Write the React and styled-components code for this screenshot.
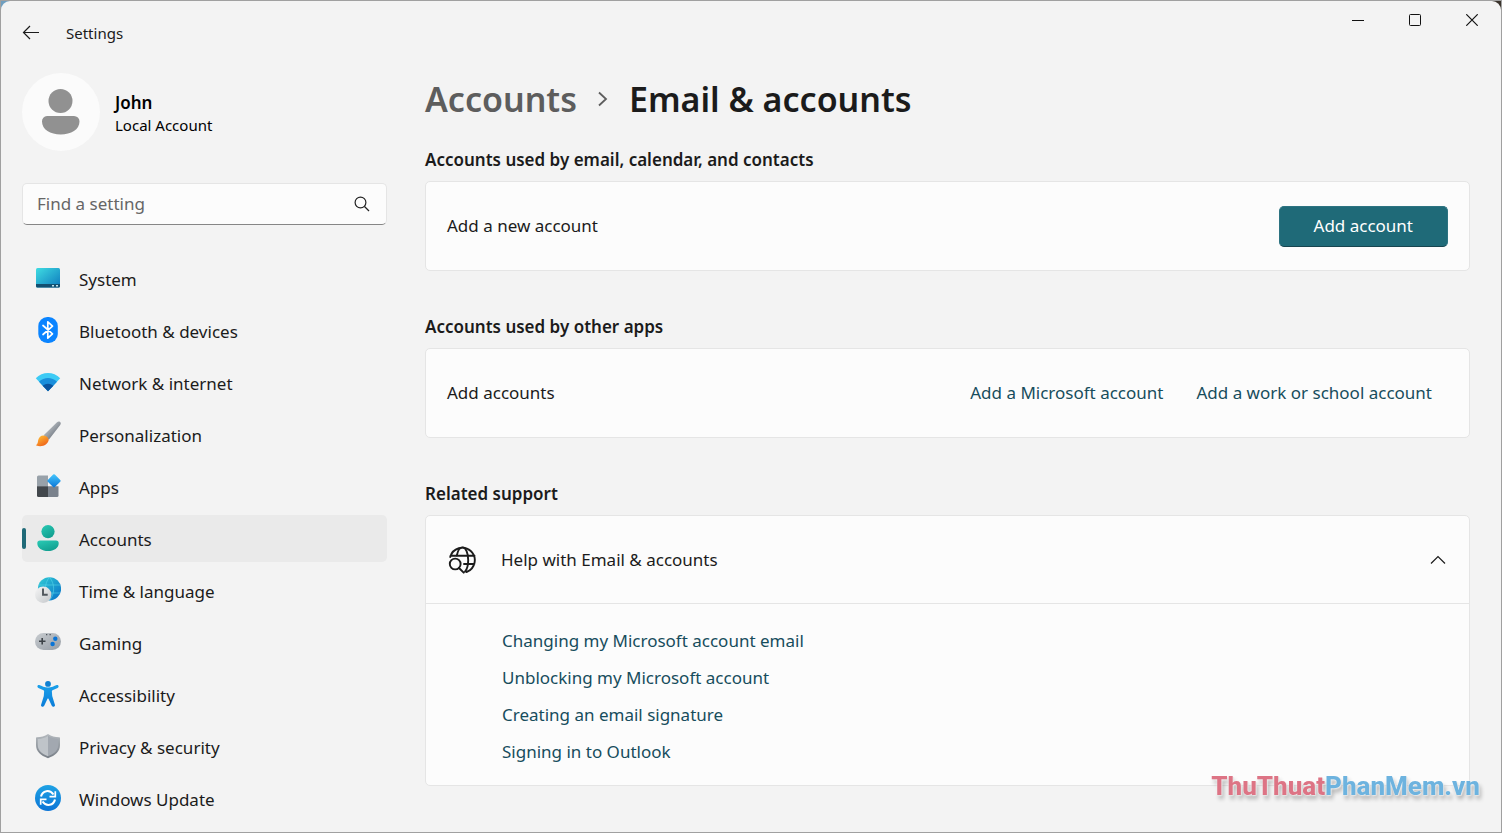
import React, { useState } from 'react'
import styled, { createGlobalStyle } from 'styled-components';

const GlobalStyle = createGlobalStyle`
  * {
    box-sizing: border-box;
  }

  body {
    margin: 0;
    color: #1b1b1b;
    font-family: "Noto Sans", "Open Sans", sans-serif;
    font-size: 17px;
    line-height: 24px;
  }

  button, input {
    font: inherit;
    color: inherit;
  }
`;

const Frame = styled.div`
  display: flex;
  min-height: 100vh;
  border: 1px solid #a0a0a0;
  background: linear-gradient(to right, #6f9fc0, #3a332c);
`;

const Window = styled.div`
  flex: 1;
  display: flex;
  flex-direction: column;
  border-radius: 9px 9px 0 0;
  background: #f3f3f3;
`;

const TitleBar = styled.header`
  display: flex;
  justify-content: space-between;
  align-items: flex-start;
  height: 64px;
`;

const TitleLeft = styled.div`
  display: flex;
  align-items: center;
  gap: 18px;
  padding: 12px 0 0 12px;
  font-size: 15px;
  line-height: 40px;
`;

const IconButton = styled.button`
  display: flex;
  align-items: center;
  justify-content: center;
  width: ${props => props.$width}px;
  height: 38px;
  padding: 0;
  border: none;
  background: transparent;

  &:hover {
    background: #e6e6e6;
  }
`;

const WindowControls = styled.div`
  display: flex;
  padding-right: 1px;
`;

const Body = styled.div`
  flex: 1;
  display: flex;
  gap: 38px;
  padding: 0 31px 8px 21px;
`;

const Sidebar = styled.aside`
  flex: none;
  width: 365px;
`;

const Profile = styled.div`
  display: flex;
  align-items: center;
  gap: 15px;
  padding-top: 8px;
  color: #000;
  font-size: 15px;
  line-height: 23px;
`;

const ProfileText = styled.div`
  padding-top: 4px;
`;

const ProfileName = styled.div`
  font-size: 17px;
  font-weight: 600;
`;

const SearchBox = styled.label`
  display: flex;
  align-items: center;
  height: 42px;
  margin: 32px 0 30px;
  padding: 0 16px 0 14px;
  border: 1px solid #e5e5e5;
  border-bottom-color: #868686;
  border-radius: 5px;
  background: #fcfcfc;
`;

const SearchInput = styled.input`
  flex: 1;
  min-width: 0;
  padding: 0;
  border: none;
  outline: none;
  background: transparent;

  &::placeholder {
    color: #666;
    opacity: 1;
  }
`;

const NavList = styled.ul`
  display: flex;
  flex-direction: column;
  gap: 5px;
  margin: 0;
  padding: 0;
  list-style: none;
`;

const NavLink = styled.a`
  position: relative;
  display: flex;
  align-items: flex-start;
  gap: 18px;
  height: 47px;
  padding: 10px 0 0 13px;
  border-radius: 5px;
  background: ${props => props.$active ? '#eaeaea' : 'transparent'};
  color: inherit;
  line-height: 30px;
  text-decoration: none;

  &:hover {
    background: #eaeaea;
  }

  &::before {
    content: "";
    display: ${props => props.$active ? 'block' : 'none'};
    position: absolute;
    left: 0;
    top: 13px;
    width: 4px;
    height: 21px;
    border-radius: 2px;
    background: #1f6a78;
  }
`;

const Main = styled.main`
  flex: 1;
  min-width: 0;
`;

const Breadcrumb = styled.h1`
  display: flex;
  align-items: center;
  gap: 21px;
  margin: 10px 0 25px;
  font-size: 34px;
  font-weight: 600;
  line-height: 48px;
`;

const BreadcrumbLink = styled.a`
  color: #5d5d5d;
  text-decoration: none;
`;

const Section = styled.section`
  margin-bottom: 44px;

  &:last-child {
    margin-bottom: 0;
  }
`;

const SectionTitle = styled.h2`
  margin: 0 0 9px;
  font-size: 17px;
  font-weight: 600;
  line-height: 24px;
`;

const Card = styled.div`
  border: 1px solid #e5e5e5;
  border-radius: 5px;
  background: #fcfcfc;
`;

const CardRow = styled.div`
  display: flex;
  align-items: center;
  justify-content: space-between;
  min-height: 88px;
  padding: 0 21px;
`;

const LinkGroup = styled.div`
  display: flex;
  gap: 33px;
  padding-right: 16px;
`;

const TextLink = styled.a`
  color: #174d5c;
  text-decoration: none;
`;

const PrimaryButton = styled.button`
  height: 41px;
  padding: 0 34px;
  border: 1px solid #2d7381;
  border-bottom-color: #174550;
  border-radius: 5px;
  background: #1f6a78;
  color: #fff;
`;

const ExpanderHeader = styled.button`
  display: flex;
  align-items: center;
  gap: 24px;
  width: 100%;
  height: 87px;
  padding: 0 23px 0 22px;
  border: none;
  background: transparent;
  text-align: left;

  span {
    flex: 1;
  }
`;

const HelpLinks = styled.ul`
  display: flex;
  flex-direction: column;
  gap: 13px;
  margin: 0;
  padding: 25px 76px 21px;
  border-top: 1px solid #e5e5e5;
  list-style: none;
`;

const Watermark = styled.div`
  position: fixed;
  right: 22px;
  bottom: 28px;
  color: #6db3df;
  font-family: Roboto, "Liberation Sans", sans-serif;
  font-size: 26px;
  font-weight: 800;
  line-height: 38px;
  text-shadow: 0 0 2px #fff, 1px 1px 1px #ddd, 2px 4px 4px rgba(0, 0, 0, 0.3);
  pointer-events: none;

  span {
    color: #dd7485;
  }
`;

const icons = {
  system: (
    <>
      <defs>
        <linearGradient id="sys" x1="0" y1="0" x2="1" y2="1">
          <stop offset="0" stopColor="#3fdce2" />
          <stop offset="1" stopColor="#0d79bd" />
        </linearGradient>
      </defs>
      <rect x="1" y="3" width="24" height="19.5" rx="1.5" fill="url(#sys)" />
      <path d="M1 19h24v2a1.500 1.500 0 0 1-1.500 1.500h-21A1.500 1.500 0 0 1 1 21z" fill="#124f70" />
      <path d="M17 20h2v1.500h-2zM21 20h2v1.500h-2z" fill="#bfe3ee" />
    </>
  ),
  bluetooth: (
    <>
      <rect x="3.300" y="0" width="19.500" height="26" rx="9" fill="#0a84ff" />
      <path d="M8 8.500l9.500 8.300-4.700 4.400V4.800l4.700 4.400L8 17.500" fill="none" stroke="#fff" strokeWidth="1.700" strokeLinejoin="round" strokeLinecap="round" />
    </>
  ),
  network: (
    <>
      <path d="M.8 9.300C7.300 2.200 18.700 2.200 25.200 9.300L13 22.300z" fill="#3dcbf5" />
      <path d="M4 12.800C9.200 7.800 16.800 7.800 22 12.800L13 22.300z" fill="#1a8edb" />
      <path d="M7.600 16.700C11 14 15 14 18.400 16.700L13 22.300z" fill="#0c549e" />
    </>
  ),
  brush: (
    <>
      <defs>
        <linearGradient id="handle" x1="0" y1="0" x2="1" y2="1">
          <stop offset=".2" stopColor="#c3c8cd" />
          <stop offset=".8" stopColor="#6a717a" />
        </linearGradient>
        <linearGradient id="bristle" x1="0" y1="0" x2=".7" y2="1">
          <stop offset=".1" stopColor="#ffbe35" />
          <stop offset="1" stopColor="#ee5f18" />
        </linearGradient>
      </defs>
      <path d="M24.800.7c1.300.8 1.200 2.200.4 3.300L13.800 18.800 8.700 14.300 22 1.200c.9-.8 1.900-1 2.800-.5z" fill="url(#handle)" />
      <path d="M8.500 14.500c2.700.1 5 2 5.200 4.500C12.800 24 6.500 26.800.8 24.200c2.200-.9 1.900-2.800 2.400-5.100.6-2.800 2.700-4.700 5.300-4.600z" fill="url(#bristle)" />
    </>
  ),
  apps: (
    <>
      <defs>
        <linearGradient id="tile" x1="0" y1="0" x2="1" y2="1">
          <stop offset="0" stopColor="#46c9ff" />
          <stop offset="1" stopColor="#0a74d6" />
        </linearGradient>
      </defs>
      <path d="M3.500 2.500H13v11H2V4A1.500 1.500 0 0 1 3.500 2.500z" fill="#98a1a9" />
      <path d="M2 13.300h11V24H3.500A1.500 1.500 0 0 1 2 22.500z" fill="#42474c" />
      <path d="M13 13.300h10.500v9.200A1.500 1.500 0 0 1 22 24h-9z" fill="#7a828c" />
      <rect x="14" y="2.800" width="10" height="10" rx="1.200" transform="rotate(45 19 7.800)" fill="url(#tile)" />
    </>
  ),
  accounts: (
    <>
      <defs>
        <linearGradient id="person" x1="0" y1="0" x2=".6" y2="1">
          <stop offset="0" stopColor="#2acbb5" />
          <stop offset="1" stopColor="#129f90" />
        </linearGradient>
      </defs>
      <circle cx="13" cy="6.600" r="6.600" fill="url(#person)" />
      <path d="M5 15.500h16a2.700 2.700 0 0 1 2.700 2.700C23.700 23 19 26 13 26S2.300 23 2.300 18.200A2.700 2.700 0 0 1 5 15.500z" fill="url(#person)" />
    </>
  ),
  time: (
    <>
      <defs>
        <linearGradient id="globe" x1="0" y1="0" x2="1" y2="1">
          <stop offset="0" stopColor="#32cdd5" />
          <stop offset="1" stopColor="#0870c8" />
        </linearGradient>
        <linearGradient id="clock" x1="0" y1="0" x2="1" y2="1">
          <stop offset="0" stopColor="#f6f6f6" />
          <stop offset="1" stopColor="#c4c7ca" />
        </linearGradient>
      </defs>
      <circle cx="14.500" cy="11.800" r="11.600" fill="url(#globe)" />
      <path d="M4 8h21M4 16h21M14.500.3c-5.500 6-5.500 17 0 23M14.500.3c5.500 6 5.500 17 0 23" fill="none" stroke="#5fe0ee" strokeWidth="1" opacity=".5" />
      <circle cx="8.200" cy="17.800" r="8.200" fill="url(#clock)" />
      <path d="M8 11.500v6.300h4.700" fill="none" stroke="#50565c" strokeWidth="1.900" />
    </>
  ),
  gaming: (
    <>
      <defs>
        <linearGradient id="pad" x1="0" y1="0" x2="1" y2="1">
          <stop offset="0" stopColor="#c8ccd0" />
          <stop offset="1" stopColor="#969da5" />
        </linearGradient>
      </defs>
      <rect x="0" y="4" width="26" height="17" rx="8.500" fill="url(#pad)" />
      <path d="M7.200 9v6.500M4 12.200h6.500" stroke="#3d4247" strokeWidth="1.600" />
      <path d="M11 5.700h1.300M14.500 5.700h1.300" stroke="#4d5359" strokeWidth="1.300" />
      <circle cx="20.300" cy="9.800" r="2.200" fill="#0a74d6" />
      <circle cx="17.600" cy="15" r="2.200" fill="#0a74d6" />
    </>
  ),
  accessibility: (
    <>
      <defs>
        <linearGradient id="figure" x1="0" y1="0" x2="0" y2="1">
          <stop offset="0" stopColor="#1aa0ea" />
          <stop offset="1" stopColor="#0a7cd8" />
        </linearGradient>
      </defs>
      <circle cx="13" cy="2.900" r="2.900" fill="#0f80d2" />
      <path d="M4.200 4c2.800.9 5.200 2.600 8.800 2.600S19 4.900 21.800 4c2-.5 2.500 2.200.8 2.900l-5.100 2.300c-.5.3-.7.600-.6 1.300l.3 4.500 2.700 8.700c.6 2-2.300 2.900-3.100 1L13.600 18c-.3-.6-.9-.6-1.200 0l-3.200 6.700c-.9 1.900-3.700 1-3.100-1L8.800 15l.3-4.500c.1-.7-.1-1-.6-1.300L3.400 6.900C1.700 6.200 2.200 3.500 4.200 4z" fill="url(#figure)" />
    </>
  ),
  privacy: (
    <>
      <defs>
        <linearGradient id="shield" x1="0" y1="0" x2="0" y2="1">
          <stop offset="0" stopColor="#b4b9be" />
          <stop offset="1" stopColor="#777e86" />
        </linearGradient>
      </defs>
      <path d="M13 1c3.500 2.300 7 3 11 3.200.6 0 1 .4 1 1V12c0 6.500-4.500 10.500-12 13.200C5.500 22.500 1 18.500 1 12V5.200c0-.6.4-1 1-1C6 4 9.500 3.300 13 1z" fill="url(#shield)" />
      <path d="M13 3c-3 1.900-6 2.700-10.200 3v6c0 5.300 3.800 8.700 10.200 11.200z" fill="#bfc4c9" />
      <path d="M13 3c3 1.900 6 2.700 10.200 3v6c0 5.300-3.800 8.700-10.200 11.200z" fill="#a2a8b0" />
    </>
  ),
  update: (
    <>
      <defs>
        <linearGradient id="upd" x1="0" y1="0" x2="0" y2="1">
          <stop offset="0" stopColor="#1fa2e4" />
          <stop offset="1" stopColor="#0a74d6" />
        </linearGradient>
      </defs>
      <circle cx="13" cy="13" r="13" fill="url(#upd)" />
      <path d="M6 11.500C7.500 5.500 14.500 4 18.500 9.500M20 14.500C18.500 20.500 11.500 22 7.500 16.500" fill="none" stroke="#fff" strokeWidth="2.100" />
      <path d="M20.300 6.300v5.300H14.500M5.700 19.700v-5.300H11.500" fill="none" stroke="#fff" strokeWidth="1.700" />
    </>
  ),
};

const navItems = [
  { label: 'System', icon: 'system' },
  { label: 'Bluetooth & devices', icon: 'bluetooth' },
  { label: 'Network & internet', icon: 'network' },
  { label: 'Personalization', icon: 'brush' },
  { label: 'Apps', icon: 'apps' },
  { label: 'Accounts', icon: 'accounts' },
  { label: 'Time & language', icon: 'time' },
  { label: 'Gaming', icon: 'gaming' },
  { label: 'Accessibility', icon: 'accessibility' },
  { label: 'Privacy & security', icon: 'privacy' },
  { label: 'Windows Update', icon: 'update' },
];

const helpLinks = [
  'Changing my Microsoft account email',
  'Unblocking my Microsoft account',
  'Creating an email signature',
  'Signing in to Outlook',
];

function Avatar() {
  return (
    <svg width="78" height="78" viewBox="0 0 78 78" aria-hidden="true">
      <circle cx="39" cy="39" r="39" fill="#fbfbfb" />
      <circle cx="38.500" cy="28" r="12" fill="#919191" />
      <path d="M25 43h27a5.500 5.500 0 0 1 5.500 5.500C57.500 56.500 49 61.500 38.700 61.500S20 56.500 20 48.500A5.200 5.200 0 0 1 25 43z" fill="#919191" />
    </svg>
  )
}

export default function App() {
  const [selected, setSelected] = useState('Accounts');
  const [isHelpOpen, setIsHelpOpen] = useState(true);
  const [query, setQuery] = useState('');

  return (
    <Frame>
      <GlobalStyle />
      <Window>
        <TitleBar>
          <TitleLeft>
            <IconButton $width={35} aria-label="Back">
              <svg width="18" height="16" viewBox="0 0 18 16" fill="none" stroke="#1b1b1b" strokeWidth="1.200">
                <path d="M17 7.500H1.500M8 1L1.500 7.500 8 14" />
              </svg>
            </IconButton>
            <div>Settings</div>
          </TitleLeft>
          <WindowControls>
            <IconButton $width={57} aria-label="Minimize">
              <svg width="12" height="12" viewBox="0 0 12 12" stroke="#111"><path d="M0 6.500h12" /></svg>
            </IconButton>
            <IconButton $width={57} aria-label="Maximize">
              <svg width="12" height="12" viewBox="0 0 12 12" fill="none" stroke="#111"><rect x=".5" y=".5" width="11" height="11" rx="1" /></svg>
            </IconButton>
            <IconButton $width={57} aria-label="Close">
              <svg width="12" height="12" viewBox="0 0 12 12" stroke="#111" strokeWidth="1.200"><path d="M.3.3l11.400 11.400M11.700.3L.3 11.700" /></svg>
            </IconButton>
          </WindowControls>
        </TitleBar>
        <Body>
          <Sidebar>
            <Profile>
              <Avatar />
              <ProfileText>
                <ProfileName>John</ProfileName>
                <div>Local Account</div>
              </ProfileText>
            </Profile>
            <SearchBox>
              <SearchInput type="text" placeholder="Find a setting" aria-label="Find a setting" value={query} onChange={(e) => setQuery(e.target.value)} />
              <svg width="16" height="16" viewBox="0 0 16 16" fill="none" stroke="#222" strokeWidth="1.200" aria-hidden="true">
                <circle cx="6.500" cy="6.500" r="5.400" />
                <path d="M10.500 10.500l4.500 4.500" />
              </svg>
            </SearchBox>
            <nav>
              <NavList>
                {navItems.map((item) => (
                  <li key={item.label}>
                    <NavLink href="#" $active={item.label === selected} onClick={() => setSelected(item.label)}>
                      <svg width="26" height="26" viewBox="0 0 26 26" aria-hidden="true">{icons[item.icon]}</svg>
                      {item.label}
                    </NavLink>
                  </li>
                ))}
              </NavList>
            </nav>
          </Sidebar>
          <Main>
            <Breadcrumb>
              <BreadcrumbLink href="#">Accounts</BreadcrumbLink>
              <svg width="10" height="16" viewBox="0 0 10 16" fill="none" stroke="#5d5d5d" strokeWidth="1.800" aria-hidden="true">
                <path d="M1 1.500L8 8l-7 6.500" />
              </svg>
              <span>Email &amp; accounts</span>
            </Breadcrumb>
            <Section>
              <SectionTitle>Accounts used by email, calendar, and contacts</SectionTitle>
              <Card>
                <CardRow>
                  <div>Add a new account</div>
                  <PrimaryButton>Add account</PrimaryButton>
                </CardRow>
              </Card>
            </Section>
            <Section>
              <SectionTitle>Accounts used by other apps</SectionTitle>
              <Card>
                <CardRow>
                  <div>Add accounts</div>
                  <LinkGroup>
                    <TextLink href="#">Add a Microsoft account</TextLink>
                    <TextLink href="#">Add a work or school account</TextLink>
                  </LinkGroup>
                </CardRow>
              </Card>
            </Section>
            <Section>
              <SectionTitle>Related support</SectionTitle>
              <Card>
                <ExpanderHeader aria-expanded={isHelpOpen} onClick={() => setIsHelpOpen(!isHelpOpen)}>
                  <svg width="29" height="28" viewBox="0 0 29 28" fill="none" stroke="#1b1b1b" strokeWidth="1.900" strokeLinecap="round" aria-hidden="true">
                    <path d="M2.200 11A12.500 12.500 0 1 1 18.500 26M2.500 9.800h24M16 18h10.300" />
                    <path d="M8.800 9.500C9.800 4.500 12 1.400 14.500 1.400c3.300 0 5.700 5.500 5.700 12.600 0 4.800-1.200 9.300-3.200 11.700" />
                    <circle cx="7.200" cy="18" r="5.400" />
                    <path d="M11 22l4.700 4.700" />
                  </svg>
                  <span>Help with Email &amp; accounts</span>
                  <svg width="16" height="10" viewBox="0 0 16 10" fill="none" stroke="#1b1b1b" strokeWidth="1.200" aria-hidden="true">
                    <path d={isHelpOpen ? 'M1 8.500l7-7 7 7' : 'M1 1.500l7 7 7-7'} />
                  </svg>
                </ExpanderHeader>
                {isHelpOpen &&
                  <HelpLinks>
                    {helpLinks.map((text) => (
                      <li key={text}><TextLink href="#">{text}</TextLink></li>
                    ))}
                  </HelpLinks>}
              </Card>
            </Section>
          </Main>
        </Body>
      </Window>
      <Watermark><span>ThuThuat</span>PhanMem.vn</Watermark>
    </Frame>
  )
}
